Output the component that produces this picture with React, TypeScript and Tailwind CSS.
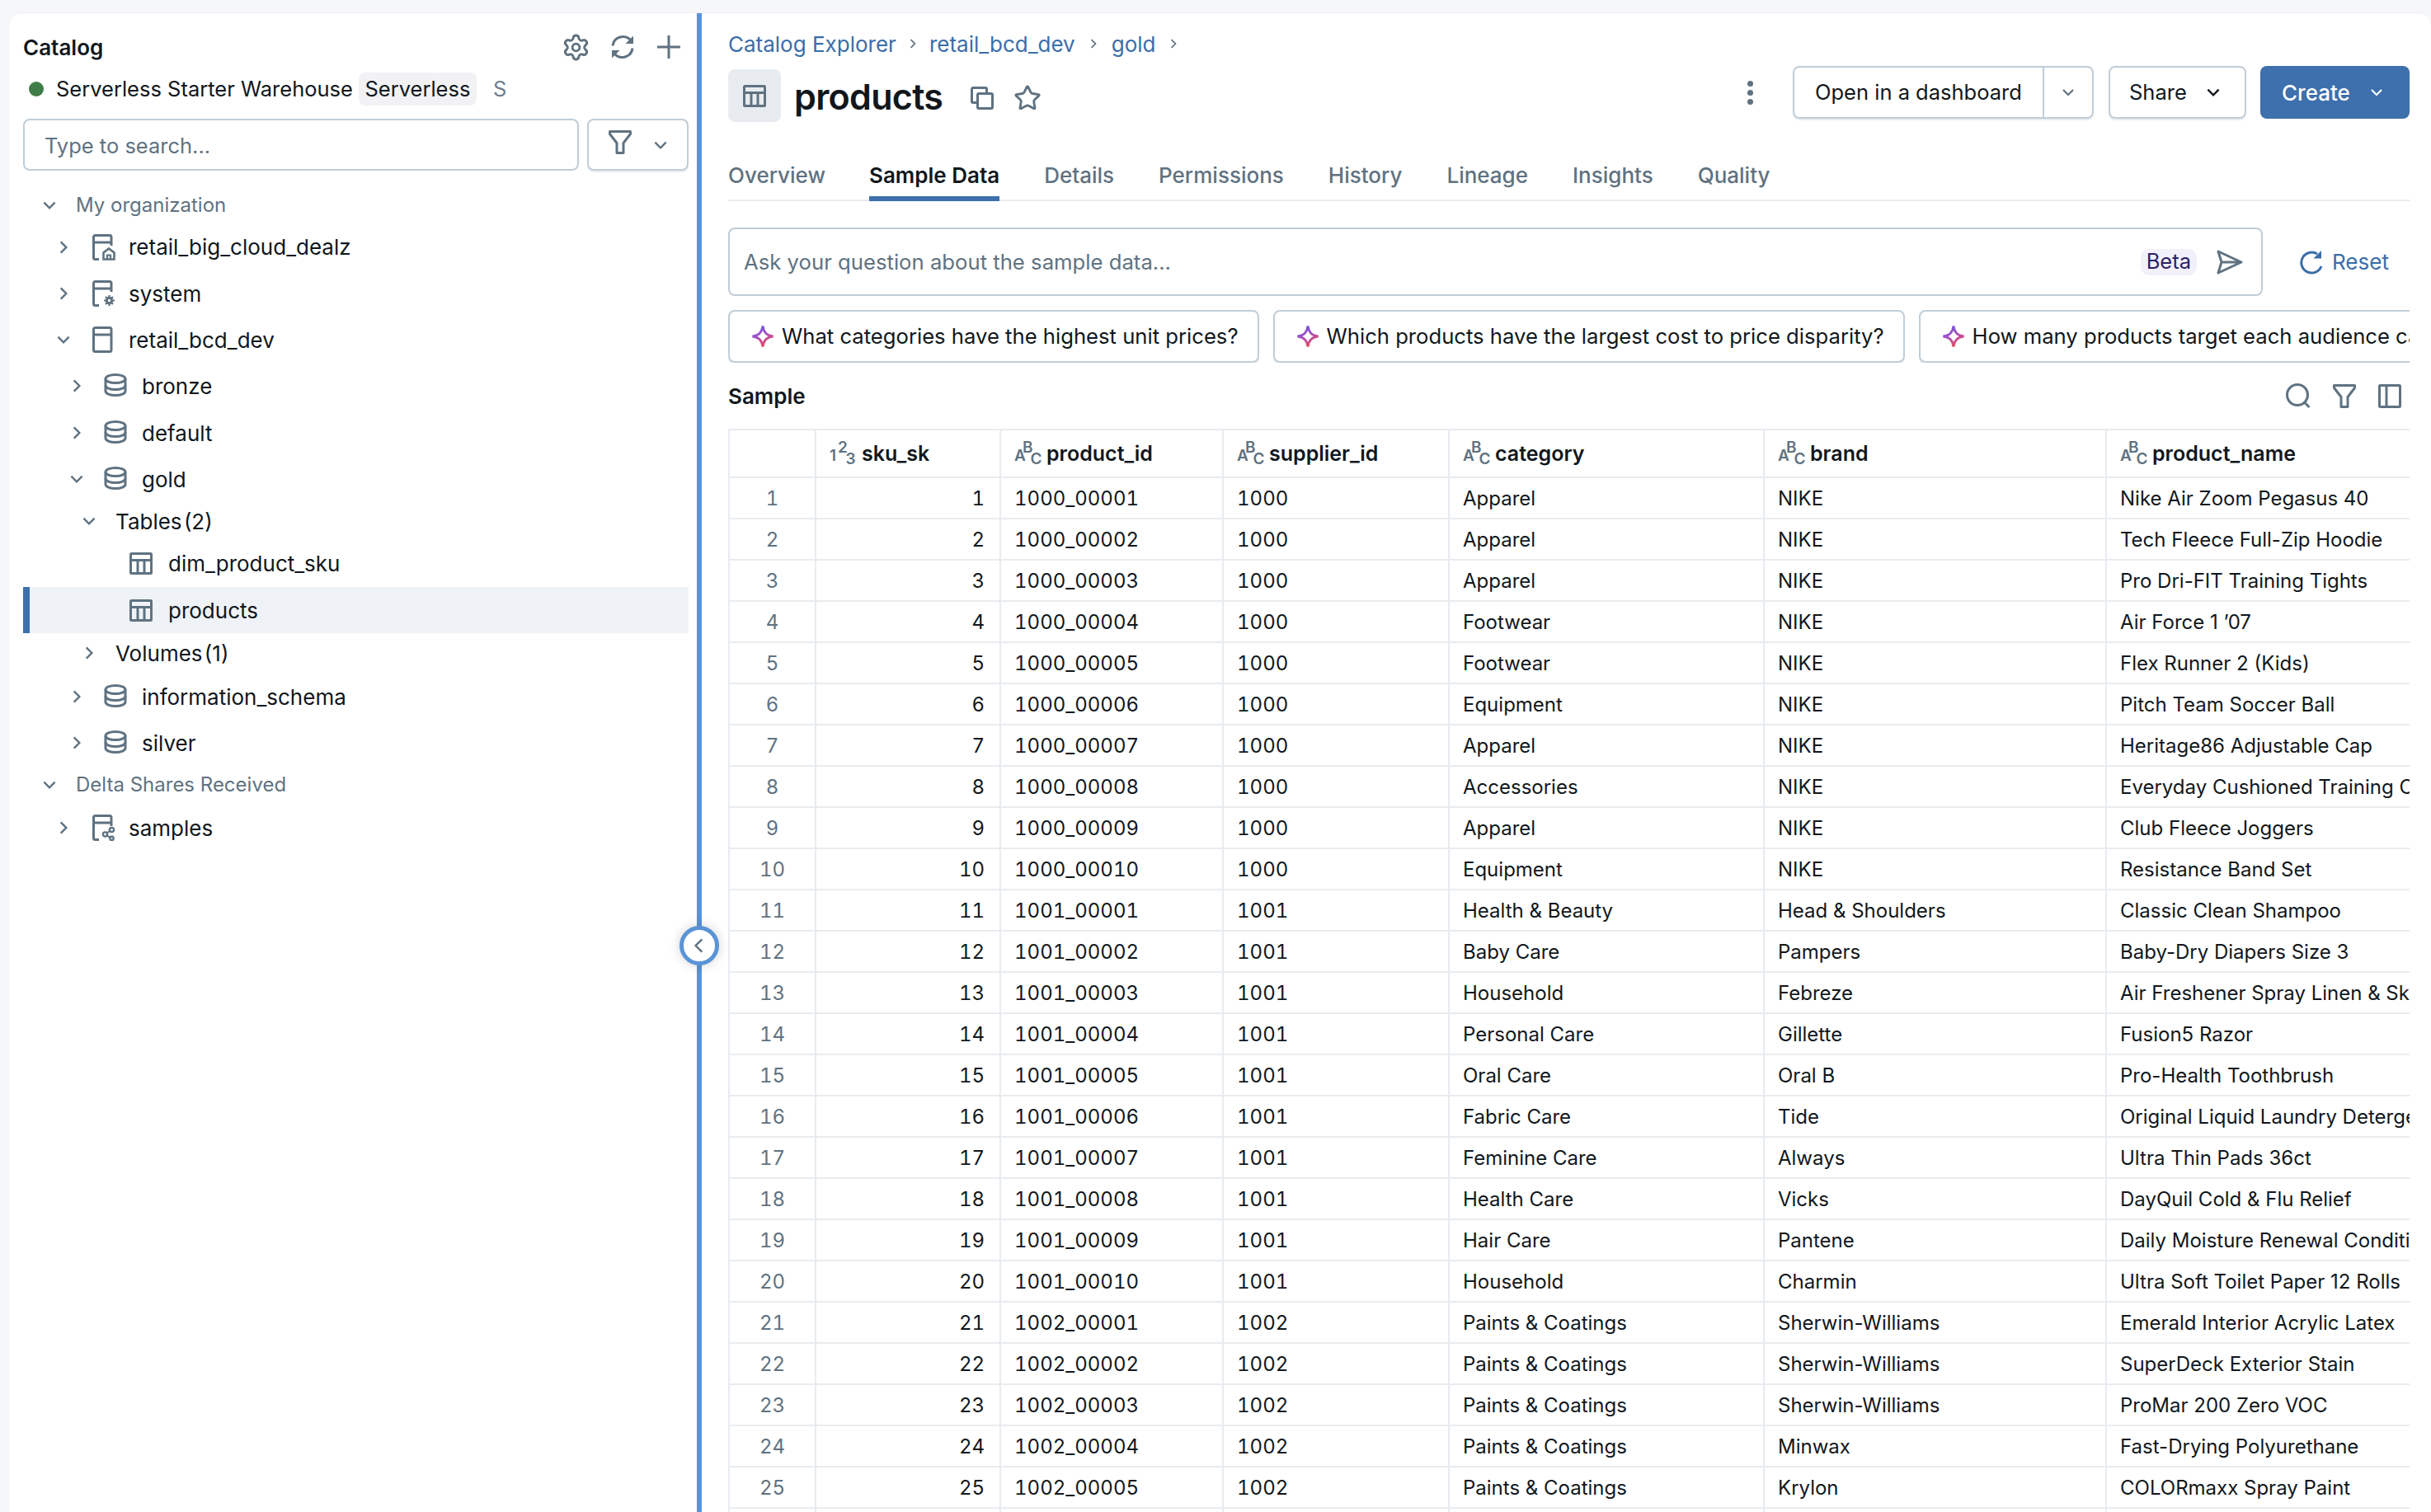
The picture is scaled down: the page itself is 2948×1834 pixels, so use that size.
import { Settings, Star } from 'lucide-react'
import type { ReactNode } from 'react'

const FONT = "font-['Inter',sans-serif]"
const GRID = 'grid grid-cols-[105px_224px_270px_274px_382px_415px_500px]'

type IconProps = { className?: string }

function Chevron({ dir = 'down', className = '' }: { dir?: 'down' | 'right' | 'left'; className?: string }) {
  const d = dir === 'down' ? 'M4 7l6 6 6-6' : dir === 'right' ? 'M7 4l6 6-6 6' : 'M13 3l-7 7 7 7'
  return (
    <svg viewBox="0 0 20 20" fill="none" stroke="currentColor" strokeWidth="2.2" className={className}>
      <path d={d} />
    </svg>
  )
}

function CatalogIcon({ badge }: { badge?: 'home' | 'gear' | 'share' }) {
  return (
    <svg viewBox="0 0 28 32" fill="none" stroke="currentColor" strokeWidth="3" className="w-[28px] h-[32px] text-[#5f7281] shrink-0">
      {badge ? (
        <path d="M23 14V3.5a2 2 0 0 0-2-2H3.5a2 2 0 0 0-2 2v25a2 2 0 0 0 2 2H8" />
      ) : (
        <path d="M23 28.5a2 2 0 0 1-2 2H3.5a2 2 0 0 1-2-2v-25a2 2 0 0 1 2-2H21a2 2 0 0 1 2 2z" />
      )}
      <path d="M1.5 10H23" />
      {badge === 'home' && (
        <>
          <path d="M13.5 30.5v-8l6.5-5 6.5 5v8z" strokeWidth="2.6" />
          <path d="M18 30.5v-5h4v5" strokeWidth="2.2" />
        </>
      )}
      {badge === 'gear' && (
        <>
          <circle cx="20.5" cy="24.5" r="3.2" strokeWidth="3" />
          <path d="M20.5 18v2.4M20.5 28.6V31M14 24.5h2.4M24.6 24.5H27M16 20l1.6 1.6M23.4 27.4L25 29M16 29l1.6-1.6M23.4 21.6L25 20" strokeWidth="2.2" />
        </>
      )}
      {badge === 'share' && (
        <>
          <circle cx="23.5" cy="18.5" r="2.6" strokeWidth="2.4" />
          <circle cx="15.5" cy="24" r="2.6" strokeWidth="2.4" />
          <circle cx="23.5" cy="29" r="2.2" strokeWidth="2.4" />
          <path d="M17.5 22.5l4-2.6M17.5 25.5l4 2.2" strokeWidth="2" />
        </>
      )}
    </svg>
  )
}

function DbIcon() {
  return (
    <svg viewBox="0 0 28 28" fill="none" stroke="currentColor" strokeWidth="3" className="w-[28px] h-[28px] -mt-[2px] text-[#5f7281] shrink-0">
      <ellipse cx="14" cy="6.5" rx="12" ry="5" />
      <path d="M2 6.5v15c0 2.8 5.4 5 12 5s12-2.2 12-5v-15" />
      <path d="M2 14.5c0 2.8 5.4 5 12 5s12-2.2 12-5" />
    </svg>
  )
}

function TableIcon({ className = 'w-[28px] h-[27px]' }: IconProps) {
  return (
    <svg viewBox="0 0 28 27" fill="none" stroke="currentColor" strokeWidth="3" className={`${className} text-[#5f7281] shrink-0`}>
      <rect x="1.5" y="1.5" width="25" height="24" rx="1" />
      <path d="M1.5 9.5h25M10 9.5v16M18 9.5v16" />
    </svg>
  )
}

function Funnel({ className = '' }: IconProps) {
  return (
    <svg viewBox="0 0 28 29" fill="none" stroke="currentColor" strokeWidth="3" strokeLinejoin="round" className={className}>
      <path d="M1.5 1.5h25v3L18 15.5v12h-8v-12L1.5 4.5z" />
    </svg>
  )
}

function Sparkle() {
  return (
    <svg viewBox="0 0 28 28" fill="none" strokeWidth="2.8" className="w-[28px] h-[28px] shrink-0">
      <defs>
        <linearGradient id="spark" x1="0" y1="0" x2="0.5" y2="1">
          <stop offset="0" stopColor="#5b5ce8" />
          <stop offset="0.5" stopColor="#a14fc4" />
          <stop offset="1" stopColor="#ea4a65" />
        </linearGradient>
      </defs>
      <path d="M14 1.500c1.200 7.800 4.600 11.200 12.500 12.500-7.900 1.300-11.300 4.700-12.500 12.500-1.200-7.800-4.600-11.200-12.500-12.500 7.900-1.300 11.300-4.700 12.500-12.500z" stroke="url(#spark)" />
    </svg>
  )
}

function TypeIcon({ kind }: { kind: 'abc' | 'num' }) {
  const letters = kind === 'abc' ? ['A', 'B', 'C'] : ['1', '2', '3']
  return (
    <svg viewBox="0 0 32 30" className="w-[32px] h-[30px] shrink-0 overflow-visible fill-[#5f7281] font-['Inter',sans-serif] font-semibold text-[19px]">
      <text x="0" y="24">{letters[0]}</text>
      <text x="10" y="14">{letters[1]}</text>
      <text x="19.500" y="28">{letters[2]}</text>
    </svg>
  )
}

type TreeRow = {
  label: string
  row: string
  pad: string
  chevron?: 'down' | 'right'
  icon?: ReactNode
  iconGap?: string
  textGap: string
  muted?: boolean
  selected?: boolean
}

const TREE: TreeRow[] = [
  { label: 'My organization', row: 'h-[46px]', pad: 'pl-[22px]', chevron: 'down', textGap: 'ml-[22px]', muted: true },
  { label: 'retail_big_cloud_dealz', row: 'h-[55px]', pad: 'pl-[39px]', chevron: 'right', icon: <CatalogIcon badge="home" />, iconGap: 'ml-[25px]', textGap: 'ml-[16px]' },
  { label: 'system', row: 'h-[58px]', pad: 'pl-[39px]', chevron: 'right', icon: <CatalogIcon badge="gear" />, iconGap: 'ml-[25px]', textGap: 'ml-[16px]' },
  { label: 'retail_bcd_dev', row: 'h-[54px]', pad: 'pl-[39px]', chevron: 'down', icon: <CatalogIcon />, iconGap: 'ml-[25px]', textGap: 'ml-[16px]' },
  { label: 'bronze', row: 'h-[58px]', pad: 'pl-[55px]', chevron: 'right', icon: <DbIcon />, iconGap: 'ml-[23px]', textGap: 'ml-[18px]' },
  { label: 'default', row: 'h-[56px]', pad: 'pl-[55px]', chevron: 'right', icon: <DbIcon />, iconGap: 'ml-[23px]', textGap: 'ml-[18px]' },
  { label: 'gold', row: 'h-[56px]', pad: 'pl-[55px]', chevron: 'down', icon: <DbIcon />, iconGap: 'ml-[23px]', textGap: 'ml-[18px]' },
  { label: 'Tables (2)', row: 'h-[46px]', pad: 'pl-[70px]', chevron: 'down', textGap: 'ml-[22px]' },
  { label: 'dim_product_sku', row: 'h-[57px]', pad: 'pl-[129px]', icon: <TableIcon />, textGap: 'ml-[19px]' },
  { label: 'products', row: 'h-[56px]', pad: 'pl-[121px]', icon: <TableIcon />, textGap: 'ml-[19px]', selected: true },
  { label: 'Volumes (1)', row: 'h-[48px]', pad: 'pl-[70px]', chevron: 'right', textGap: 'ml-[22px]' },
  { label: 'information_schema', row: 'h-[58px]', pad: 'pl-[55px]', chevron: 'right', icon: <DbIcon />, iconGap: 'ml-[23px]', textGap: 'ml-[18px]' },
  { label: 'silver', row: 'h-[54px]', pad: 'pl-[55px]', chevron: 'right', icon: <DbIcon />, iconGap: 'ml-[23px]', textGap: 'ml-[18px]' },
  { label: 'Delta Shares Received', row: 'h-[48px]', pad: 'pl-[22px]', chevron: 'down', textGap: 'ml-[22px]', muted: true },
  { label: 'samples', row: 'h-[56px]', pad: 'pl-[39px]', chevron: 'right', icon: <CatalogIcon badge="share" />, iconGap: 'ml-[25px]', textGap: 'ml-[16px]' },
]

const COLUMNS = [
  { name: 'sku_sk', kind: 'num' as const },
  { name: 'product_id', kind: 'abc' as const },
  { name: 'supplier_id', kind: 'abc' as const },
  { name: 'category', kind: 'abc' as const },
  { name: 'brand', kind: 'abc' as const },
  { name: 'product_name', kind: 'abc' as const },
]

const ROWS: string[][] = [
  ['1000_00001', '1000', 'Apparel', 'NIKE', 'Nike Air Zoom Pegasus 40'],
  ['1000_00002', '1000', 'Apparel', 'NIKE', 'Tech Fleece Full-Zip Hoodie'],
  ['1000_00003', '1000', 'Apparel', 'NIKE', 'Pro Dri-FIT Training Tights'],
  ['1000_00004', '1000', 'Footwear', 'NIKE', 'Air Force 1 ’07'],
  ['1000_00005', '1000', 'Footwear', 'NIKE', 'Flex Runner 2 (Kids)'],
  ['1000_00006', '1000', 'Equipment', 'NIKE', 'Pitch Team Soccer Ball'],
  ['1000_00007', '1000', 'Apparel', 'NIKE', 'Heritage86 Adjustable Cap'],
  ['1000_00008', '1000', 'Accessories', 'NIKE', 'Everyday Cushioned Training Crew Socks'],
  ['1000_00009', '1000', 'Apparel', 'NIKE', 'Club Fleece Joggers'],
  ['1000_00010', '1000', 'Equipment', 'NIKE', 'Resistance Band Set'],
  ['1001_00001', '1001', 'Health & Beauty', 'Head & Shoulders', 'Classic Clean Shampoo'],
  ['1001_00002', '1001', 'Baby Care', 'Pampers', 'Baby-Dry Diapers Size 3'],
  ['1001_00003', '1001', 'Household', 'Febreze', 'Air Freshener Spray Linen & Sky'],
  ['1001_00004', '1001', 'Personal Care', 'Gillette', 'Fusion5 Razor'],
  ['1001_00005', '1001', 'Oral Care', 'Oral B', 'Pro-Health Toothbrush'],
  ['1001_00006', '1001', 'Fabric Care', 'Tide', 'Original Liquid Laundry Detergent'],
  ['1001_00007', '1001', 'Feminine Care', 'Always', 'Ultra Thin Pads 36ct'],
  ['1001_00008', '1001', 'Health Care', 'Vicks', 'DayQuil Cold & Flu Relief'],
  ['1001_00009', '1001', 'Hair Care', 'Pantene', 'Daily Moisture Renewal Conditioner'],
  ['1001_00010', '1001', 'Household', 'Charmin', 'Ultra Soft Toilet Paper 12 Rolls'],
  ['1002_00001', '1002', 'Paints & Coatings', 'Sherwin-Williams', 'Emerald Interior Acrylic Latex'],
  ['1002_00002', '1002', 'Paints & Coatings', 'Sherwin-Williams', 'SuperDeck Exterior Stain'],
  ['1002_00003', '1002', 'Paints & Coatings', 'Sherwin-Williams', 'ProMar 200 Zero VOC'],
  ['1002_00004', '1002', 'Paints & Coatings', 'Minwax', 'Fast-Drying Polyurethane'],
  ['1002_00005', '1002', 'Paints & Coatings', 'Krylon', 'COLORmaxx Spray Paint'],
]

const TABS = ['Overview', 'Sample Data', 'Details', 'Permissions', 'History', 'Lineage', 'Insights', 'Quality']
const CHIPS = [
  'What categories have the highest unit prices?',
  'Which products have the largest cost to price disparity?',
  'How many products target each audience category?',
]

function Sidebar() {
  return (
    <aside className="w-[834px] h-full shrink-0 pl-[17px] pr-[10px]">
      <div className="flex items-center justify-between h-[40px] mt-[21px] pr-[10px]">
        <span className="text-[26px] font-semibold">Catalog</span>
        <div className="flex items-center text-[#5f7281]">
          <Settings size={35} strokeWidth={2} />
          <svg viewBox="0 0 30 30" fill="none" stroke="currentColor" strokeWidth="3" className="w-[30px] h-[30px] ml-[24px]">
            <path d="M3 13.500A12.500 12.500 0 0 1 25 7" />
            <path d="M27 16.500A12.500 12.500 0 0 1 5 23" />
            <path d="M28 1.500v9.500h-9.500z" fill="currentColor" stroke="none" />
            <path d="M2 28.500V19h9.500z" fill="currentColor" stroke="none" />
          </svg>
          <svg viewBox="0 0 28 28" fill="none" stroke="currentColor" strokeWidth="3" className="w-[28px] h-[28px] ml-[27px]">
            <path d="M14 0v28M0 14h28" />
          </svg>
        </div>
      </div>
      <div className="flex items-center h-[40px] mt-[11px] text-[25.500px]">
        <span className="w-[18px] h-[18px] rounded-full bg-[#3f7d47] ml-[7px]" />
        <span className="ml-[15px] pt-[1px]">Serverless Starter Warehouse</span>
        <span className="ml-[7px] w-[143px] h-[40px] pt-[1px] flex items-center justify-center rounded-[8px] bg-[#f2f2f4]">Serverless</span>
        <span className="ml-[20px] pt-[1px] text-[#6f7c88]">S</span>
      </div>
      <div className="flex gap-[10px] mt-[16px]">
        <div className="w-[674px] h-[63px] border-2 border-[#c0cdd8] rounded-[8px] flex items-center pl-[24px] pt-[3px] text-[25.500px] text-[#5f7281]">
          Type to search...
        </div>
        <div className="w-[123px] h-[63px] border-2 border-[#c0cdd8] rounded-[8px] flex items-center pl-[24px] text-[#5f7281] shadow-[0_2px_0_#e9edf1]">
          <Funnel className="w-[28px] h-[29px] -mt-[6px]" />
          <Chevron className="w-[22px] h-[22px] ml-[24px]" />
        </div>
      </div>
      <div className="mt-[19px] text-[26px] [word-spacing:-5px]">
        {TREE.map((r) => (
          <div key={r.label} className={`relative flex items-center ${r.row} ${r.pad} ${r.selected ? 'bg-[#eff2f6] border-l-[8px] border-[#3d70ad]' : ''}`}>
            {r.chevron && <Chevron dir={r.chevron} className="w-[22px] h-[22px] -mx-[1px] shrink-0 text-[#5f7281]" />}
            {r.icon && <span className={`flex ${r.iconGap ?? ''}`}>{r.icon}</span>}
            <span className={`${r.textGap} ${r.muted ? 'text-[24px] text-[#5f7281] [word-spacing:0]' : ''}`}>{r.label}</span>
          </div>
        ))}
      </div>
    </aside>
  )
}

function Splitter() {
  return (
    <div className="relative w-[6px] shrink-0 bg-[#5b94d6]">
      <div className="absolute left-[-21px] top-[1107px] w-[48px] h-[48px] rounded-full bg-white border-[5px] border-[#5b94d6] flex items-center justify-center shadow-[0_0_14px_rgba(0,0,0,0.18)] text-[#5f7281]">
        <Chevron dir="left" className="w-[22px] h-[22px]" />
      </div>
    </div>
  )
}

function OutlineButton({ children, className = '' }: { children: ReactNode; className?: string }) {
  return (
    <div className={`h-[64px] border-2 border-[#c0cdd8] rounded-[8px] flex items-center text-[25.500px] shadow-[0_2px_0_#e9edf1] ${className}`}>
      {children}
    </div>
  )
}

function Header() {
  return (
    <>
      <div className="flex items-center h-[32px] mt-[21px] text-[26px] text-[#3a6ea8]">
        <span>Catalog Explorer</span>
        <Chevron dir="right" className="w-[16px] h-[16px] mx-[12px] text-[#5f7281]" />
        <span>retail_bcd_dev</span>
        <Chevron dir="right" className="w-[16px] h-[16px] mx-[14px] text-[#5f7281]" />
        <span>gold</span>
        <Chevron dir="right" className="w-[16px] h-[16px] ml-[14px] text-[#5f7281]" />
      </div>
      <div className="flex items-start h-[68px] mt-[11px]">
        <div className="mt-[4px] w-[64px] h-[64px] rounded-[8px] bg-[#e8ecf0] flex items-center justify-center">
          <TableIcon />
        </div>
        <h1 className="ml-[16px] mt-[5px] h-[64px] flex items-center text-[43px] font-semibold tracking-[-0.7px]">products</h1>
        <svg viewBox="0 0 28 28" fill="none" stroke="currentColor" strokeWidth="3" className="w-[28px] h-[28px] ml-[34px] mt-[25px] text-[#5f7281]">
          <path d="M7 19.500H3a1.500 1.500 0 0 1-1.500-1.500V3A1.500 1.500 0 0 1 3 1.500h15A1.500 1.500 0 0 1 19.500 3v4" />
          <rect x="8.500" y="8.500" width="18" height="18" rx="1.500" />
        </svg>
        <Star size={34} strokeWidth={2} className="ml-[24px] mt-[22px] text-[#5f7281]" />
        <div className="ml-auto flex items-center">
          <div className="flex flex-col gap-[4px] mr-[48px]">
            <span className="w-[7px] h-[7px] rounded-full bg-[#5f7281]" />
            <span className="w-[7px] h-[7px] rounded-full bg-[#5f7281]" />
            <span className="w-[7px] h-[7px] rounded-full bg-[#5f7281]" />
          </div>
          <OutlineButton className="w-[365px]">
            <span className="w-[301px] pl-[25px]">Open in a dashboard</span>
            <span className="h-full border-l-2 border-[#c0cdd8] flex-1 flex items-center justify-center">
              <Chevron className="w-[20px] h-[20px] text-[#5f7281]" />
            </span>
          </OutlineButton>
          <OutlineButton className="w-[167px] ml-[18px] pl-[23px]">
            <span>Share</span>
            <Chevron className="w-[22px] h-[22px] ml-[21px]" />
          </OutlineButton>
          <div className="w-[181px] h-[64px] ml-[17px] rounded-[8px] bg-[#3d70ad] text-white text-[26px] font-medium flex items-center pl-[26px]">
            <span>Create</span>
            <Chevron className="w-[20px] h-[20px] ml-[22px]" />
          </div>
        </div>
      </div>
    </>
  )
}

function Tabs() {
  return (
    <div className="flex items-center gap-[54px] h-[62px] mt-[34px] border-b-2 border-[#e8ecf0] text-[26px] font-medium text-[#5f7281]">
      {TABS.map((t) => (
        <div key={t} className={`relative h-full flex items-center ${t === 'Sample Data' ? 'font-semibold text-[#11171c] -ml-[1px]' : ''}`}>
          {t}
          {t === 'Sample Data' && <span className="absolute left-0 right-0 -bottom-[2px] h-[6px] bg-[#3d70ad]" />}
        </div>
      ))}
    </div>
  )
}

function Assistant() {
  return (
    <>
      <div className="flex items-center mt-[32px]">
        <div className="w-[1861px] h-[83px] border-2 border-[#c0cdd8] rounded-[8px] flex items-center pl-[17px] pr-[22px] text-[25.500px] text-[#5f7281]">
          <span className="pt-[2px] text-[25.700px]">Ask your question about the sample data...</span>
          <span className="ml-auto px-[7px] h-[32px] rounded-[10px] bg-[#f2f0fb] text-[#2b2166] flex items-center">Beta</span>
          <svg viewBox="0 0 32 30" fill="none" stroke="currentColor" strokeWidth="3" strokeLinejoin="round" className="w-[32px] h-[30px] ml-[24px]">
            <path d="M2 2l28 13L2 28l4-13zM6 15h24" />
          </svg>
        </div>
        <div className="flex items-center ml-[44px] text-[26px] text-[#3a6ea8]">
          <svg viewBox="0 0 30 30" fill="none" stroke="currentColor" strokeWidth="3" className="w-[30px] h-[30px]">
            <path d="M27 20A12.500 12.500 0 1 1 22 5" />
            <path d="M27 1v9.500h-9.500z" fill="currentColor" stroke="none" />
          </svg>
          <span className="ml-[10px]">Reset</span>
        </div>
      </div>
      <div className="flex gap-[17px] mt-[17px] overflow-hidden">
        {CHIPS.map((c) => (
          <div key={c} className="h-[64px] shrink-0 border-2 border-[#c0cdd8] rounded-[8px] flex items-center pl-[26px] pr-[23px] text-[25.650px] whitespace-nowrap shadow-[0_2px_0_#e9edf1]">
            <Sparkle />
            <span className="ml-[9px] pt-[1px]">{c}</span>
          </div>
        ))}
      </div>
    </>
  )
}

function SampleTable() {
  return (
    <>
      <div className="flex items-center justify-between h-[40px] mt-[20px] pr-[10px]">
        <span className="text-[26px] font-semibold">Sample</span>
        <div className="flex items-center gap-[27px] text-[#5f7281]">
          <svg viewBox="0 0 30 30" fill="none" stroke="currentColor" strokeWidth="3" className="w-[30px] h-[30px]">
            <circle cx="14" cy="14" r="12.500" />
            <path d="M22.500 23l6 6" />
          </svg>
          <Funnel className="w-[28px] h-[29px]" />
          <svg viewBox="0 0 28 29" fill="none" stroke="currentColor" strokeWidth="3" className="w-[28px] h-[29px]">
            <rect x="1.500" y="1.500" width="25" height="26" rx="1" />
            <path d="M10 1.500v26" />
          </svg>
        </div>
      </div>
      <div className="mt-[20px] overflow-hidden text-[24px]">
        <div className={`${GRID} h-[60px] border-y-2 border-[#e8ecf0] font-semibold text-[25px]`}>
          <div className="border-l-2 border-[#e8ecf0]" />
          {COLUMNS.map((c) => (
            <div key={c.name} className="border-l-2 border-[#e8ecf0] flex items-center pl-[16px] gap-[7px]">
              <TypeIcon kind={c.kind} />
              <span className="pt-[2px]">{c.name}</span>
            </div>
          ))}
        </div>
        {ROWS.map((r, i) => (
          <div key={r[0]} className={`${GRID} h-[50px] border-b-2 border-[#e8ecf0] whitespace-nowrap`}>
            <div className="border-l-2 border-[#e8ecf0] flex items-center justify-center pt-[2px] tabular-nums text-[#5f7281]">{i + 1}</div>
            <div className="border-l-2 border-[#e8ecf0] flex items-center justify-end pt-[2px] pr-[18px] tabular-nums">{i + 1}</div>
            {r.map((v, j) => (
              <div key={j} className={`border-l-2 border-[#e8ecf0] flex items-center pl-[16px] pt-[2px] overflow-hidden ${j < 2 ? 'tabular-nums' : ''}`}>{v}</div>
            ))}
          </div>
        ))}
        <div className={`${GRID} h-[50px]`}>
          {[0, 1, 2, 3, 4, 5, 6].map((k) => (
            <div key={k} className="border-l-2 border-[#e8ecf0]" />
          ))}
        </div>
      </div>
    </>
  )
}

export default function App() {
  return (
    <div className={`${FONT} w-[2948px] h-[1834px] overflow-hidden bg-[#f6f7f9] pt-[15px] pl-[11px] text-[#11171c]`}>
      <div className="flex h-full bg-white rounded-t-[16px] border-t border-[#eceff2] overflow-hidden">
        <Sidebar />
        <Splitter />
        <main className="flex-1 min-w-0 pl-[32px] pr-[26px]">
          <Header />
          <Tabs />
          <Assistant />
          <SampleTable />
        </main>
      </div>
    </div>
  )
}
